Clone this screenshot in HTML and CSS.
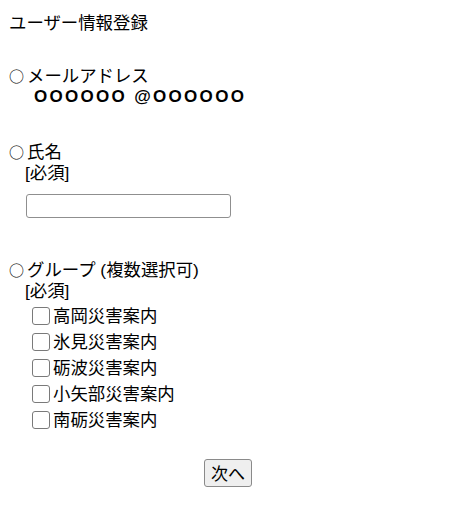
FILE: index.html
```html
<!DOCTYPE html>
<html lang="ja">
<head>
<meta charset="utf-8">
<title>ユーザー情報登録</title>
<link rel="stylesheet" href="styles.css">
</head>
<body>
<div class="title">ユーザー情報登録</div>

<section class="sec sec-mail">
  <div class="head"><span class="mark">○</span>メールアドレス</div>
  <div class="email">OOOOOO @OOOOOO</div>
</section>

<section class="sec sec-name">
  <div class="head"><span class="mark">○</span>氏名</div>
  <div class="body">
    <div class="req">[必須]</div>
    <input class="text-input" type="text">
  </div>
</section>

<section class="sec sec-group">
  <div class="head"><span class="mark">○</span>グループ (複数選択可)</div>
  <div class="body">
    <div class="req">[必須]</div>
    <ul class="checks">
      <li><label class="check"><input type="checkbox" class="box">高岡災害案内</label></li>
      <li><label class="check"><input type="checkbox" class="box">氷見災害案内</label></li>
      <li><label class="check"><input type="checkbox" class="box">砺波災害案内</label></li>
      <li><label class="check"><input type="checkbox" class="box">小矢部災害案内</label></li>
      <li><label class="check"><input type="checkbox" class="box">南砺災害案内</label></li>
    </ul>
  </div>
</section>

<div class="actions"><button class="next" type="button">次へ</button></div>
</body>
</html>
```

FILE: styles.css
```css
* { box-sizing: border-box; }

html, body {
  background: #ffffff;
}

body {
  margin: 10px 8px 8px 8px;
  font-family: "Liberation Sans", "Noto Sans CJK JP", sans-serif;
  font-size: 17.4px;
  color: #000000;
}

.title {
  line-height: 26px;
  padding-left: 1px;
}

.sec {
  display: flex;
  flex-direction: column;
}

.head {
  line-height: 22px;
}

.mark {
  font-family: "Noto Sans CJK JP", sans-serif;
  font-size: 15px;
  margin-left: 1px;
  margin-right: 3px;
}

.sec-mail { margin-top: 29px; }
.sec-name { margin-top: 35px; }
.sec-group { margin-top: 41px; }

.email {
  line-height: 19px;
  padding-left: 26px;
  font-family: "Liberation Sans", Arial, sans-serif;
  font-weight: bold;
  font-size: 17px;
  letter-spacing: 2.3px;
}

.body {
  padding-left: 17px;
  display: flex;
  flex-direction: column;
  align-items: flex-start;
}

.req {
  line-height: 20px;
}

.text-input {
  margin: 11px 0 0 1px;
  width: 205px;
  height: 24px;
  border: 1px solid #8f8f8f;
  border-radius: 3px;
  background: #ffffff;
  font: inherit;
  padding: 0 4px;
}

.checks {
  list-style: none;
  margin: 2px 0 0 0;
  padding: 0;
}

.checks li {
  height: 26px;
  display: flex;
  align-items: center;
}

.check {
  display: flex;
  align-items: center;
  gap: 3px;
  margin-left: 7px;
  line-height: 20px;
}

.box {
  appearance: none;
  -webkit-appearance: none;
  width: 18px;
  height: 18px;
  margin: 0;
  border: 1px solid #7a7a7a;
  border-radius: 3px;
  background: #ffffff;
}

.actions {
  display: flex;
  justify-content: center;
  margin-top: 26px;
}

.next {
  height: 28px;
  padding: 0 6px;
  font-family: "Noto Sans CJK JP", sans-serif;
  font-size: 17px;
  line-height: 26px;
  color: #000;
  background: #efefef;
  border: 1px solid #8a8a8a;
  border-radius: 3px;
}
```
